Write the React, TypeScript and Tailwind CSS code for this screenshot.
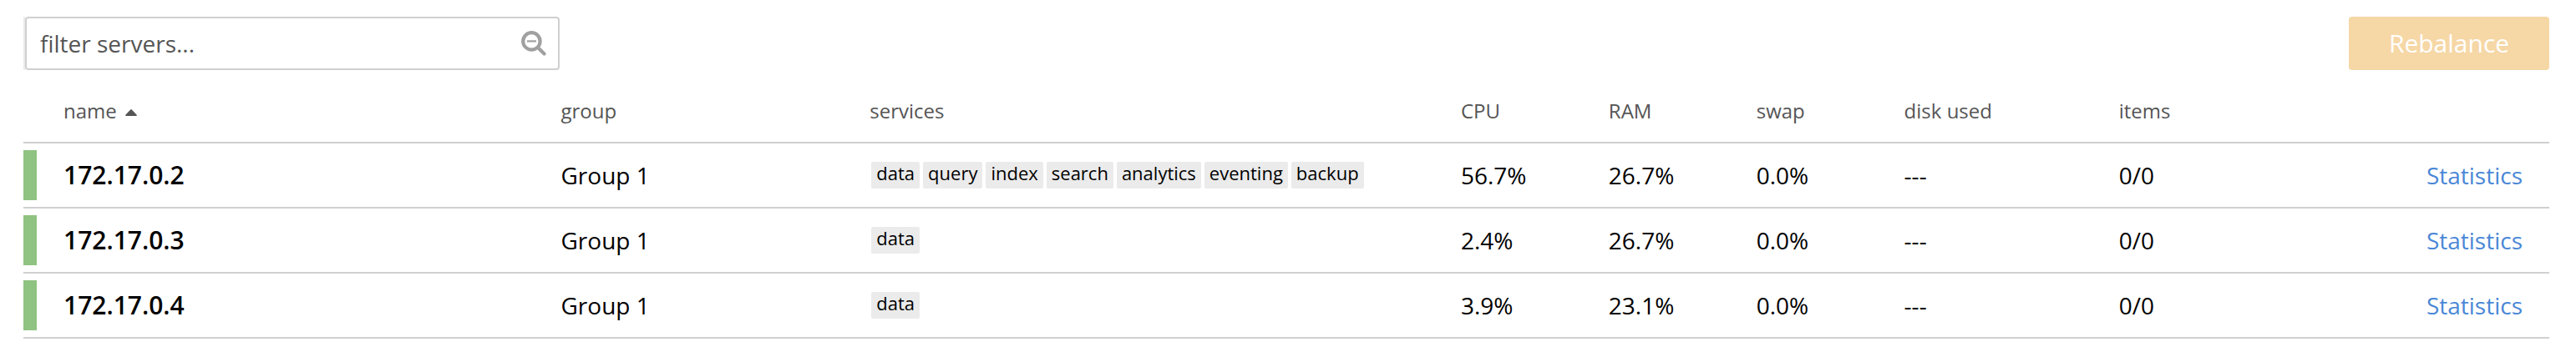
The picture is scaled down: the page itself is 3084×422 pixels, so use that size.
type Server = {
  name: string;
  group: string;
  services: string[];
  cpu: string;
  ram: string;
  swap: string;
  disk: string;
  items: string;
};

const servers: Server[] = [
  {
    name: "172.17.0.2",
    group: "Group 1",
    services: ["data", "query", "index", "search", "analytics", "eventing", "backup"],
    cpu: "56.7%",
    ram: "26.7%",
    swap: "0.0%",
    disk: "---",
    items: "0/0",
  },
  { name: "172.17.0.3", group: "Group 1", services: ["data"], cpu: "2.4%", ram: "26.7%", swap: "0.0%", disk: "---", items: "0/0" },
  { name: "172.17.0.4", group: "Group 1", services: ["data"], cpu: "3.9%", ram: "23.1%", swap: "0.0%", disk: "---", items: "0/0" },
];

const cell = "border-b-2 border-[#d0d0d0] p-0";
const headCell = "border-b-2 border-[#d0d0d0] p-0 font-normal";

function SearchMinusIcon() {
  return (
    <svg aria-hidden="true" viewBox="0 0 30 30" className="size-[30px] shrink-0 text-[#a0a0a0]" fill="none" stroke="currentColor">
      <circle cx="12.4" cy="12.4" r="10.2" strokeWidth="4.2" />
      <path d="M7 12.4h11" strokeWidth="2.2" />
      <path d="M20.5 20.5l7 7" strokeWidth="4.2" strokeLinecap="round" />
    </svg>
  );
}

function Toolbar() {
  return (
    <div className="flex items-center justify-between">
      <div className="border-l-2 border-[#ebebeb]">
        <label className="flex h-16 w-[640px] items-center rounded border-2 border-[#d0d0d0] bg-white pr-3.5">
          <input
            type="text"
            aria-label="filter servers"
            placeholder="filter servers..."
            className="h-full min-w-0 flex-1 bg-transparent pl-4 text-[28px] leading-10 text-black outline-none placeholder:text-[#555555] placeholder:opacity-100"
          />
          <SearchMinusIcon />
        </label>
      </div>
      <button type="button" disabled className="h-16 w-60 rounded bg-[#f6d7a6] text-center text-3xl text-white">
        Rebalance
      </button>
    </div>
  );
}

function ServerRow({ server }: { server: Server }) {
  return (
    <tr className="h-[78px]">
      <td className={cell}>
        <div className="flex items-center gap-8">
          <span className="h-[60px] w-4 bg-[#8fc381]" />
          <span className="text-3xl font-semibold">{server.name}</span>
        </div>
      </td>
      <td className={cell}>{server.group}</td>
      <td className={cell}>
        <ul className="flex gap-1 pl-0.5">
          {server.services.map((service) => (
            <li key={service} className="rounded-xs bg-[#ebebeb] px-1.5 pb-1.5 text-[22px] leading-[26px]">
              {service}
            </li>
          ))}
        </ul>
      </td>
      <td className={cell}>{server.cpu}</td>
      <td className={cell}>{server.ram}</td>
      <td className={cell}>{server.swap}</td>
      <td className={cell}>{server.disk}</td>
      <td className={cell}>{server.items}</td>
      <td className="border-b-2 border-[#d0d0d0] p-0 pr-8 text-right">
        <a href="#statistics" className="text-[#4a87d6]">
          Statistics
        </a>
      </td>
    </tr>
  );
}

export default function App() {
  return (
    <main className="bg-white pt-5 pr-8 pb-4 pl-7 font-['Open_Sans',sans-serif] text-black">
      <Toolbar />
      <table className="mt-3 w-full table-fixed border-separate border-spacing-0 text-left text-[28px] leading-10">
        <colgroup>
          <col className="w-[21.28%]" />
          <col className="w-[12.23%]" />
          <col className="w-[23.4%]" />
          <col className="w-[5.85%]" />
          <col className="w-[5.85%]" />
          <col className="w-[5.85%]" />
          <col className="w-[8.5%]" />
          <col className="w-[8.5%]" />
          <col />
        </colgroup>
        <thead>
          <tr className="h-[76px] text-2xl text-[#555555]">
            <th scope="col" aria-sort="ascending" className="border-b-2 border-[#d0d0d0] p-0 pl-12 font-normal">
              <button type="button" className="flex items-center gap-2.5">
                name
                <svg aria-hidden="true" viewBox="0 0 14 8" className="mt-1 h-2 w-3.5" fill="currentColor">
                  <path d="M6.2.5a1.1 1.1 0 0 1 1.6 0l5.9 6.2c.5.6.2 1.3-.6 1.3H.9C.1 8-.2 7.3.3 6.7z" />
                </svg>
              </button>
            </th>
            <th scope="col" className={headCell}>group</th>
            <th scope="col" className={headCell}>services</th>
            <th scope="col" className={headCell}>CPU</th>
            <th scope="col" className={headCell}>RAM</th>
            <th scope="col" className={headCell}>swap</th>
            <th scope="col" className={headCell}>disk used</th>
            <th scope="col" className={headCell}>items</th>
            <td className={cell} />
          </tr>
        </thead>
        <tbody>
          {servers.map((server) => (
            <ServerRow key={server.name} server={server} />
          ))}
        </tbody>
      </table>
    </main>
  );
}
